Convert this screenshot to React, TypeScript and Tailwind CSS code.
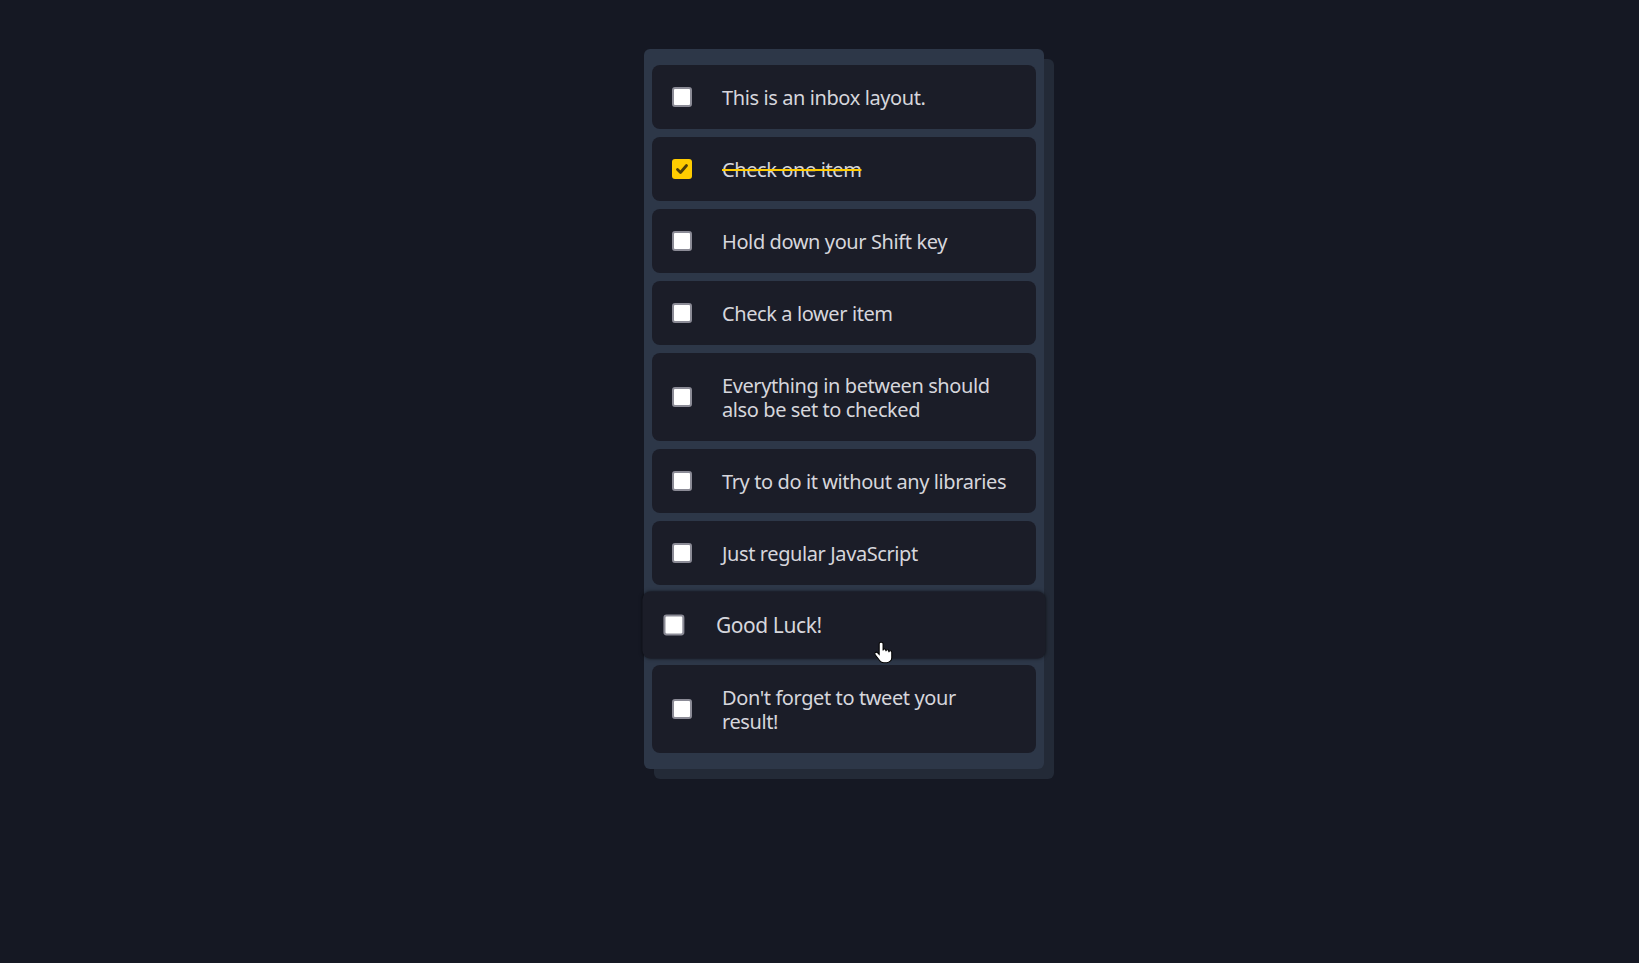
import React from "react";

type Item = { text: string; checked?: boolean; hover?: boolean };

const items: Item[] = [
  { text: "This is an inbox layout." },
  { text: "Check one item", checked: true },
  { text: "Hold down your Shift key" },
  { text: "Check a lower item" },
  { text: "Everything in between should also be set to checked" },
  { text: "Try to do it without any libraries" },
  { text: "Just regular JavaScript" },
  { text: "Good Luck!", hover: true },
  { text: "Don't forget to tweet your result!" },
];

function Box({ checked }: { checked?: boolean }) {
  if (checked) {
    return (
      <span className="flex h-5 w-5 shrink-0 items-center justify-center rounded-[3px] bg-[#ffcc00]">
        <svg viewBox="0 0 20 20" className="h-5 w-5">
          <path d="M5.5 10.5 L8.5 13.5 L14.5 6.5" fill="none" stroke="#4d3d0a" strokeWidth="2.8" strokeLinecap="round" strokeLinejoin="round" />
        </svg>
      </span>
    );
  }
  return <span className="block h-5 w-5 shrink-0 rounded-[3px] border-2 border-[#8b8b96] bg-white" />;
}

export default function App() {
  return (
    <div className="min-h-[963px] w-full bg-[#151823] pt-[49px] font-['Noto_Sans',sans-serif]">
      <div className="ml-[644px] w-[400px] rounded-md bg-[#2d3748] px-2 py-4 shadow-[10px_10px_0_#232a37]">
        <div className="flex flex-col gap-2">
          {items.map((it, i) => (
            <div
              key={i}
              className={
                "relative flex items-center rounded-lg bg-[#1b1d28] py-5 pl-5 pr-6" +
                (it.hover ? " scale-[1.05] shadow-[0_0_3px_rgba(0,0,0,0.5)]" : "")
              }
            >
              <Box checked={it.checked} />
              <span
                className={
                  "relative top-px ml-[30px] text-[20px] leading-6 tracking-[-0.02em] text-[#d6d6dc]" +
                  (it.checked ? " line-through decoration-[#ffcc00] decoration-2" : "")
                }
              >
                {it.text}
              </span>
              {it.hover && (
                <svg className="absolute left-[221px] top-[47px] h-[22px] w-[18px]" viewBox="0 0 18 22">
                  <path
                    d="M6 1.5c-.9 0-1.5.7-1.5 1.5v10l-1.4-1.5c-.7-.7-1.7-.7-2.3-.1-.6.6-.5 1.5.1 2.2l4.2 5.4c.9 1.2 2.2 1.9 3.8 1.9h2.8c2.6 0 4.8-2.1 4.8-4.8v-5.2c0-.8-.6-1.4-1.4-1.4s-1.4.6-1.4 1.4v-1c0-.8-.6-1.4-1.4-1.4s-1.4.6-1.4 1.4v-.6c0-.8-.6-1.4-1.4-1.4s-1.3.6-1.3 1.4V3c0-.8-.6-1.5-1.5-1.5z"
                    fill="#fff"
                    stroke="#000"
                    strokeWidth="1"
                  />
                </svg>
              )}
            </div>
          ))}
        </div>
      </div>
    </div>
  );
}
